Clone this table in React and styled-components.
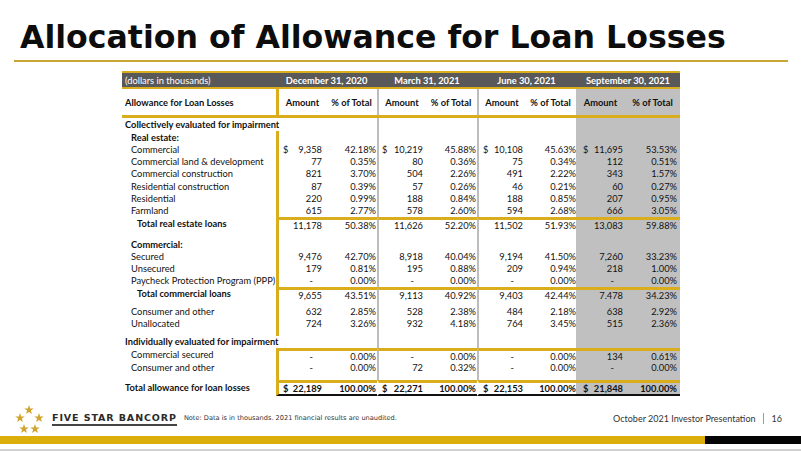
import React from "react";
import styled, { createGlobalStyle } from "styled-components";

const GOLD = "#d9ad1b";
const SHADE = "#c0c0c0";
const DIVIDER = "#bdbdbd";
const COLS = "154px 50px 51px 48px 52px 48px 51px 49px 55px";

const GlobalStyle = createGlobalStyle`
  * { box-sizing: border-box; }
  body {
    margin: 0;
    background: #fff;
    font-family: Lato, "Open Sans", sans-serif;
  }
`;

// per data column: left border, padding, shading
const columns = [
  { lw: 3, gold: true, pl: 4, pr: 4 },
  { lw: 0, pl: 0, pr: 1 },
  { lw: 2, divider: true, pl: 3, pr: 2 },
  { lw: 0, pl: 0, pr: 1 },
  { lw: 2, divider: true, pl: 4, pr: 2 },
  { lw: 0, pl: 0, pr: 0 },
  { lw: 0, shade: true, pl: 7, pr: 2 },
  { lw: 0, shade: true, pl: 0, pr: 3 },
];

const rows = [
  { kind: "section", label: "Collectively evaluated for impairment", h: 13 },
  { kind: "group", label: "Real estate:", indent: 1, h: 12 },
  { label: "Commercial", indent: 1, dollar: true, vals: ["9,358", "42.18%", "10,219", "45.88%", "10,108", "45.63%", "11,695", "53.53%"] },
  { label: "Commercial land & development", indent: 1, vals: ["77", "0.35%", "80", "0.36%", "75", "0.34%", "112", "0.51%"] },
  { label: "Commercial construction", indent: 1, vals: ["821", "3.70%", "504", "2.26%", "491", "2.22%", "343", "1.57%"] },
  { label: "Residential construction", indent: 1, vals: ["87", "0.39%", "57", "0.26%", "46", "0.21%", "60", "0.27%"] },
  { label: "Residential", indent: 1, vals: ["220", "0.99%", "188", "0.84%", "188", "0.85%", "207", "0.95%"] },
  { label: "Farmland", indent: 1, vals: ["615", "2.77%", "578", "2.60%", "594", "2.68%", "666", "3.05%"] },
  { label: "Total real estate loans", indent: 2, bold: true, top: true, h: 13.5, vals: ["11,178", "50.38%", "11,626", "52.20%", "11,502", "51.93%", "13,083", "59.88%"] },
  { kind: "blank", h: 8 },
  { kind: "group", label: "Commercial:", indent: 1, h: 12 },
  { label: "Secured", indent: 1, h: 12.2, vals: ["9,476", "42.70%", "8,918", "40.04%", "9,194", "41.50%", "7,260", "33.23%"] },
  { label: "Unsecured", indent: 1, h: 12.2, vals: ["179", "0.81%", "195", "0.88%", "209", "0.94%", "218", "1.00%"] },
  { label: "Paycheck Protection Program (PPP)", indent: 1, h: 12.2, vals: ["-", "0.00%", "-", "0.00%", "-", "0.00%", "-", "0.00%"] },
  { label: "Total commercial loans", indent: 2, bold: true, top: true, h: 12.6, vals: ["9,655", "43.51%", "9,113", "40.92%", "9,403", "42.44%", "7,478", "34.23%"] },
  { kind: "blank", h: 6.5 },
  { label: "Consumer and other", indent: 1, h: 12, vals: ["632", "2.85%", "528", "2.38%", "484", "2.18%", "638", "2.92%"] },
  { label: "Unallocated", indent: 1, h: 12, vals: ["724", "3.26%", "932", "4.18%", "764", "3.45%", "515", "2.36%"] },
  { kind: "blank", h: 6 },
  { kind: "section", label: "Individually evaluated for impairment", h: 12 },
  { label: "Commercial secured", indent: 1, top: true, h: 14, vals: ["-", "0.00%", "-", "0.00%", "-", "0.00%", "134", "0.61%"] },
  { label: "Consumer and other", indent: 1, h: 12, vals: ["-", "0.00%", "72", "0.32%", "-", "0.00%", "-", "0.00%"] },
  { kind: "blank", h: 6 },
  { label: "Total allowance for loan losses", indent: 0, bold: true, boldVals: true, top: true, total: true, dollar: true, h: 16, vals: ["22,189", "100.00%", "22,271", "100.00%", "22,153", "100.00%", "21,848", "100.00%"] },
];

const Page = styled.div`
  width: 801px;
  height: 451px;
  overflow: hidden;
  display: flex;
  flex-direction: column;
`;

const Title = styled.h1`
  margin: 19px 0 0 20px;
  font-family: "DejaVu Sans", Verdana, sans-serif;
  font-weight: 700;
  font-size: 31.6px;
  line-height: 36px;
  color: #0d0d0d;
  white-space: nowrap;
`;

const TitleRule = styled.div`
  margin: 5px 13px 0 14px;
  height: 2px;
  background: #c9a632;
`;

const Table = styled.div`
  margin: 9px 0 0 122px;
  width: 558px;
  font-size: 9.3px;
  color: #111;
`;

const HeaderRow = styled.div`
  display: grid;
  grid-template-columns: 154px 101px 100px 99px 104px;
  height: 18px;
  background: #595959;
  border-top: 2px solid ${GOLD};
  border-bottom: 2px solid ${GOLD};
  color: #fff;
`;

const HeaderCell = styled.div`
  display: flex;
  align-items: center;
  justify-content: ${(p) => (p.$left ? "flex-start" : "center")};
  padding-left: ${(p) => (p.$left ? 3 : 0)}px;
  font-weight: ${(p) => (p.$left ? 400 : 700)};
  white-space: nowrap;
`;

const Row = styled.div`
  display: grid;
  grid-template-columns: ${COLS};
  height: ${(p) => p.$h}px;
  border-bottom: ${(p) => (p.$rule ? `3px solid ${GOLD}` : "none")};
`;

const Label = styled.div`
  display: flex;
  align-items: center;
  padding-left: ${(p) => 3 + p.$indent * 6}px;
  font-weight: ${(p) => (p.$bold ? 700 : 400)};
  white-space: nowrap;
  position: relative;
  z-index: 1;
`;

const Cell = styled.div`
  display: flex;
  align-items: center;
  justify-content: ${(p) => (p.$spread ? "space-between" : p.$center ? "center" : "flex-end")};
  padding: 0 ${(p) => p.$pr}px 0 ${(p) => p.$pl}px;
  border-left: ${(p) => p.$lw}px solid ${(p) => p.$lc};
  border-top: ${(p) => (p.$top ? `3px solid ${GOLD}` : "none")};
  border-bottom: ${(p) => (p.$total ? "2px solid #111" : "none")};
  background: ${(p) => (p.$shade ? SHADE : "transparent")};
  font-weight: ${(p) => (p.$bold ? 700 : 400)};
  white-space: nowrap;
`;

const Dash = styled.span`
  margin-right: 9px;
`;

const Footer = styled.div`
  height: 40px;
  padding: 6px 19px 0 14px;
  display: flex;
  align-items: center;
`;

const Brand = styled.div`
  display: flex;
  flex-direction: column;
  margin-left: 6px;
`;

const BrandName = styled.span`
  font-family: "DejaVu Sans", Verdana, sans-serif;
  font-weight: 700;
  font-size: 9.5px;
  letter-spacing: 0.9px;
  color: #2b2b2b;
  line-height: 11px;
  white-space: nowrap;
`;

const BrandRule = styled.div`
  height: 2px;
  margin-top: 1px;
  background: #444;
`;

const Note = styled.span`
  margin-left: 7px;
  font-family: "DejaVu Sans", Verdana, sans-serif;
  font-size: 6.6px;
  color: #333;
  white-space: nowrap;
  padding-bottom: 1px;
`;

const Deck = styled.div`
  margin-left: auto;
  display: flex;
  align-items: center;
  font-family: Lato, "Open Sans", sans-serif;
  font-size: 9px;
  color: #333;
  white-space: nowrap;
`;

const Pipe = styled.span`
  width: 1px;
  height: 11px;
  background: #9a9a9a;
  margin: 0 8px 0 7px;
`;

const Bar = styled.div`
  display: flex;
  height: 8px;
`;

const BarPart = styled.div`
  width: ${(p) => p.$w};
  flex: ${(p) => (p.$grow ? 1 : "none")};
  background: ${(p) => p.$c};
`;

const BottomRule = styled.div`
  margin-top: 5px;
  height: 2px;
  background: #d2d2d2;
`;

function starPoints(cx, cy, r) {
  const pts = [];
  for (let i = 0; i < 10; i++) {
    const rad = i % 2 === 0 ? r : r * 0.4;
    const a = -Math.PI / 2 + (i * Math.PI) / 5;
    pts.push(`${(cx + rad * Math.cos(a)).toFixed(2)},${(cy + rad * Math.sin(a)).toFixed(2)}`);
  }
  return pts.join(" ");
}

const Stars = () => (
  <svg width="32" height="32" viewBox="0 0 32 32">
    {[
      [15, 7],
      [6, 15],
      [25, 15],
      [10, 26],
      [21, 26],
    ].map(([x, y]) => (
      <polygon key={`${x}-${y}`} points={starPoints(x, y, 5)} fill="#d0a42e" />
    ))}
  </svg>
);

const periods = ["December 31, 2020", "March 31, 2021", "June 30, 2021", "September 30, 2021"];

function dataCells(row) {
  const goldLeft = row.kind !== "section";
  return columns.map((c, i) => {
    const isAmt = i % 2 === 0;
    const v = row.vals ? row.vals[i] : null;
    const lc = c.gold ? (goldLeft ? GOLD : "transparent") : c.divider && !row.total ? DIVIDER : "transparent";
    let content = null;
    if (v === "-") content = <Dash>-</Dash>;
    else if (v && isAmt && row.dollar) content = (<><span>$</span><span>{v}</span></>);
    else if (v) content = v;
    return (
      <Cell
        key={i}
        $lw={c.lw}
        $lc={lc}
        $pl={c.pl}
        $pr={c.pr}
        $shade={c.shade}
        $top={row.top}
        $total={row.total}
        $bold={row.boldVals}
        $spread={isAmt && row.dollar && v}
      >
        {content}
      </Cell>
    );
  });
}

const SubHeader = () => (
  <Row $h={29} $rule>
    <Label $indent={0} $bold>
      Allowance for Loan Losses
    </Label>
    {columns.map((c, i) => (
      <Cell key={i} $lw={c.lw} $lc={c.gold ? GOLD : c.divider ? DIVIDER : "transparent"} $pl={0} $pr={0} $shade={c.shade} $bold $center>
        {i % 2 === 0 ? "Amount" : "% of Total"}
      </Cell>
    ))}
  </Row>
);

export default function App() {
  return (
    <>
      <GlobalStyle />
      <Page>
        <Title>Allocation of Allowance for Loan Losses</Title>
        <TitleRule />
        <Table>
          <HeaderRow>
            <HeaderCell $left>(dollars in thousands)</HeaderCell>
            {periods.map((p) => (
              <HeaderCell key={p}>{p}</HeaderCell>
            ))}
          </HeaderRow>
          <SubHeader />
          {rows.map((r, i) => (
            <Row key={i} $h={r.h || 12.3}>
              <Label $indent={r.indent || 0} $bold={r.bold || r.kind === "section" || r.kind === "group"}>
                {r.label || ""}
              </Label>
              {dataCells(r)}
            </Row>
          ))}
        </Table>
        <Footer>
          <Stars />
          <Brand>
            <BrandName>FIVE STAR BANCORP</BrandName>
            <BrandRule />
          </Brand>
          <Note>Note: Data is in thousands. 2021 financial results are unaudited.</Note>
          <Deck>
            October 2021 Investor Presentation
            <Pipe />
            16
          </Deck>
        </Footer>
        <Bar>
          <BarPart $w="705px" $c="#dcae0a" />
          <BarPart $grow $c="#050505" />
        </Bar>
        <BottomRule />
      </Page>
    </>
  );
}
